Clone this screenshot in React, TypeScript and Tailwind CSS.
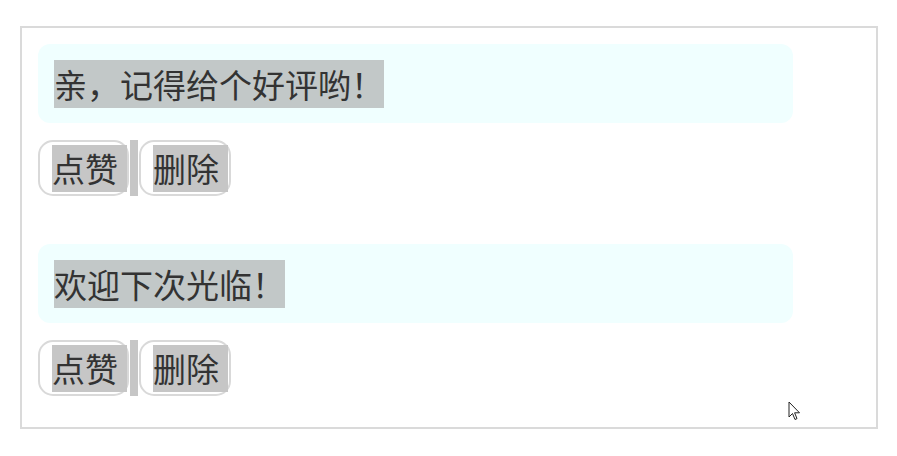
import React from "react";

const font = { fontFamily: '"Noto Sans CJK SC", "Noto Sans", sans-serif' };

function Buttons() {
  return (
    <div className="flex items-stretch h-[56px]">
      <button className="flex items-center h-[56px] w-[91px] border-2 border-[#d9d9d9] rounded-[15px] pl-[12px] pr-0 bg-white">
        <span className="bg-[#c6c6c6] text-[33px] leading-[47px] text-[#333] w-[75px] text-left block">点赞</span>
      </button>
      <div className="w-[8px] ml-[1px] mr-[1px] bg-[#c6c6c6]" />
      <button className="flex items-center h-[56px] w-[92px] border-2 border-[#d9d9d9] rounded-[15px] pl-[12px] pr-0 bg-white">
        <span className="bg-[#c6c6c6] text-[33px] leading-[47px] text-[#333] w-[75px] text-left block">删除</span>
      </button>
    </div>
  );
}

function Item({ text, last }: { text: string; last?: boolean }) {
  return (
    <div className={last ? "" : "mb-[48px]"}>
      <div className="w-[755px] bg-[#f0ffff] rounded-[12px] pl-[16px] pt-[16px] pb-[15px]">
        <span className="inline-block bg-[#c2c8c8] text-[33px] leading-[48px] text-[#333] align-top">{text}</span>
      </div>
      <div className="mt-[17px]">
        <Buttons />
      </div>
    </div>
  );
}

export default function App() {
  return (
    <div className="relative w-[897px] h-[456px] bg-white overflow-hidden" style={font}>
      <div className="ml-[20px] mt-[26px] w-[858px] h-[403px] border-2 border-[#dadada] pt-[16px] pl-[16px]">
        <Item text="亲，记得给个好评哟！" />
        <Item text="欢迎下次光临！" last />
      </div>
      <svg className="absolute left-[788px] top-[401px]" width="13" height="21" viewBox="0 0 13 21">
        <path d="M1 1 L1 16 L4.5 12.5 L7 18.5 L9 17.6 L6.6 11.8 L11.5 11.8 Z" fill="#fff" stroke="#222" strokeWidth="1" strokeLinejoin="miter" />
      </svg>
    </div>
  );
}
